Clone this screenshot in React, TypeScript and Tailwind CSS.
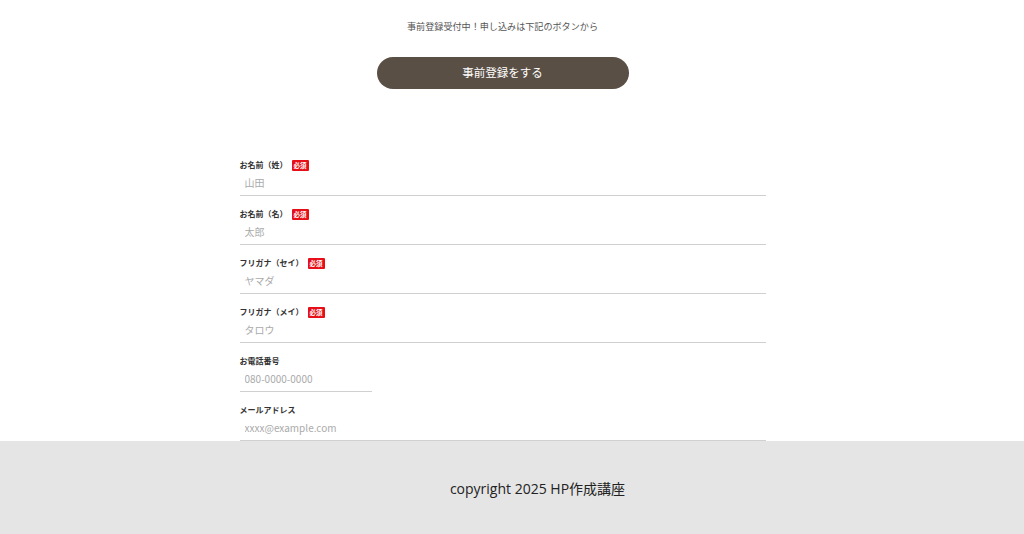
const fields = [
  { label: "お名前（姓）", ph: "山田", req: true, full: true },
  { label: "お名前（名）", ph: "太郎", req: true, full: true },
  { label: "フリガナ（セイ）", ph: "ヤマダ", req: true, full: true },
  { label: "フリガナ（メイ）", ph: "タロウ", req: true, full: true },
  { label: "お電話番号", ph: "080-0000-0000", req: false, full: false },
  { label: "メールアドレス", ph: "xxxx@example.com", req: false, full: true },
];

export default function App() {
  return (
    <div className="flex h-[534px] flex-col overflow-hidden bg-white font-['Noto_Sans_CJK_JP',sans-serif]">
      <div className="flex flex-1 flex-col items-center pt-[20px] pr-[19px]">
        <p className="text-[9.1px] leading-[12px] text-[#555]">事前登録受付中！申し込みは下記のボタンから</p>
        <button className="mt-[25px] h-[32px] w-[252px] rounded-full bg-[#5a4f45] text-[11.5px] text-white">事前登録をする</button>
        <form className="mt-[58px] w-[526px]">
          {fields.map((f) => (
            <div key={f.label} className="pt-[12px]">
              <div className="flex h-[12px] items-center gap-[4px]">
                <span className="text-[8px] font-bold text-[#333]">{f.label}</span>
                {f.req && (
                  <span className="flex h-[11px] items-center rounded-[1px] bg-[#e60f19] px-[2px] text-[6.5px] font-bold leading-none text-white">必須</span>
                )}
              </div>
              <input
                placeholder={f.ph}
                className={`mt-[2px] block h-[23px] border-b border-[#d0d0d0] px-[5px] pb-[3px] text-[10px] outline-none placeholder:text-[#aaa] ${f.full ? "w-full" : "w-[132px]"}`}
              />
            </div>
          ))}
        </form>
      </div>
      <footer className="flex h-[93px] shrink-0 items-center justify-center bg-[#e5e5e5] pt-[2px] pl-[51px]">
        <span className="font-['Open_Sans','Noto_Sans_CJK_JP',sans-serif] text-[14px] text-[#222]">copyright 2025 HP作成講座</span>
      </footer>
    </div>
  );
}
